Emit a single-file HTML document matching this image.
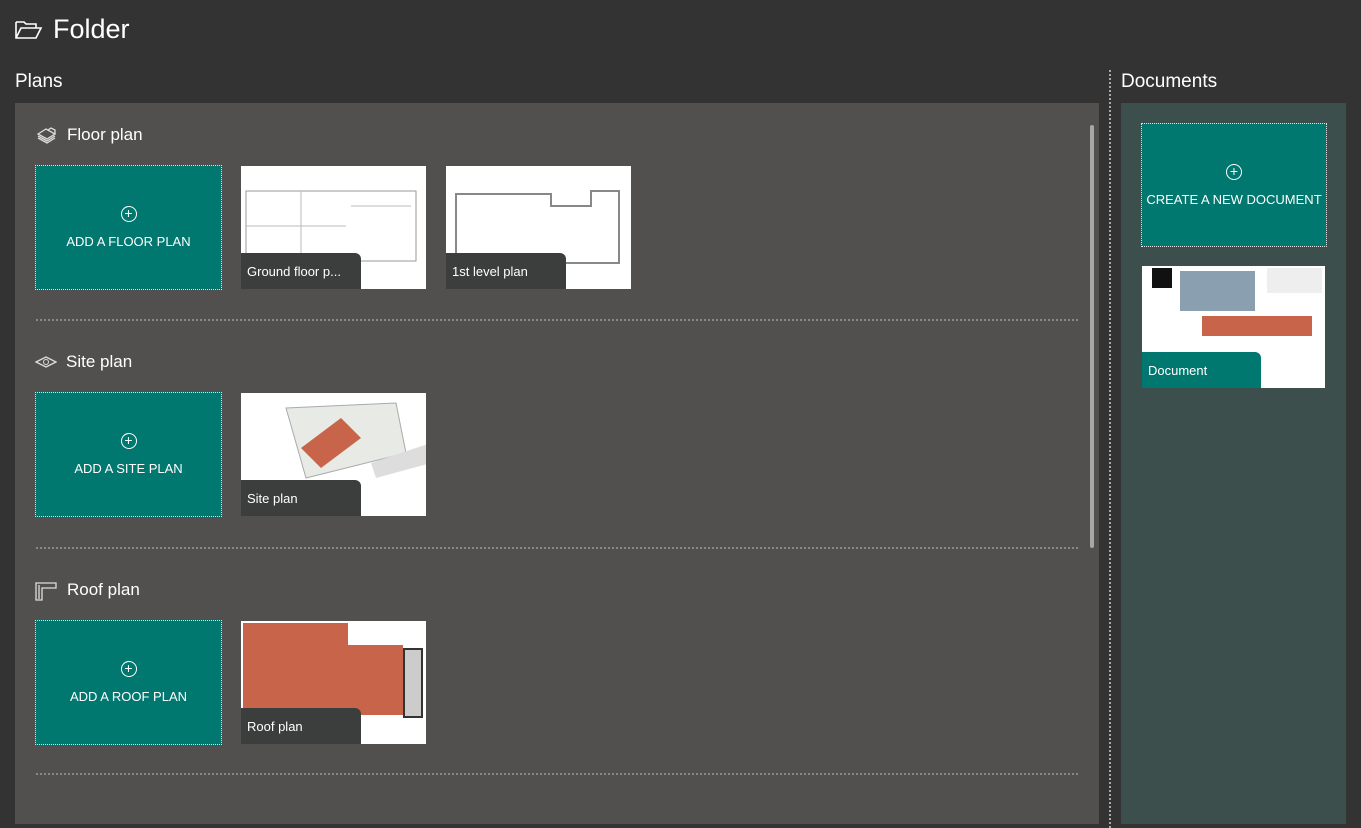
<!DOCTYPE html>
<html><head><style>
*{margin:0;padding:0;box-sizing:border-box}
body{width:1361px;height:828px;background:#333;font-family:"Liberation Sans",sans-serif;color:#fff;position:relative;overflow:hidden}
.a{position:absolute}
.add{position:absolute;width:187px;height:125px;background:#00776f;border:1px dotted #e0e0e0;text-align:center;font-size:13px}
.add .p{position:absolute;left:50%;top:40px;margin-left:-8px;width:16px;height:16px;border:1.5px solid #fff;border-radius:50%;font-size:14px;line-height:12px}
.add .t{position:absolute;left:0;right:0;top:68px}
.th{position:absolute;width:185px;height:123px;background:#fff;overflow:hidden}
.lb{position:absolute;left:0;bottom:0;width:120px;height:36px;background:#3c3d3d;border-radius:0 6px 0 0;font-size:13px;padding:11px 6px}
.sep{position:absolute;left:36px;width:1042px;border-top:2px dotted #8a8886}
.h{position:absolute;font-size:17px;left:67px}
</style></head><body>
<svg class="a" style="left:14px;top:19px" width="30" height="22" viewBox="0 0 30 22"><path d="M2 3h8l2 2h10v4M2 3v16h20l5-10H7L2 19" fill="none" stroke="#fff" stroke-width="1.6"/></svg>
<div class="a" style="left:53px;top:14px;font-size:27px">Folder</div>
<div class="a" style="left:15px;top:71px;font-size:19px">Plans</div>
<div class="a" style="left:1121px;top:71px;font-size:19px">Documents</div>
<div class="a" style="left:1109px;top:70px;height:758px;border-left:2px dotted #aaa"></div>
<div class="a" style="left:15px;top:103px;width:1084px;height:721px;background:#52504e"></div>
<div class="a" style="left:1090px;top:125px;width:4px;height:423px;background:#a9a7a5;border-radius:2px"></div>
<div class="a" style="left:1121px;top:103px;width:225px;height:721px;background:#3d4f4d"></div>

<svg class="a" style="left:36px;top:126px" width="22" height="18" viewBox="0 0 22 18"><path d="M2 8l8-5 9 5-8 5zM2 10l9 5 8-5M2 12l9 5 8-5M12 4l3-2 4 2v4" fill="none" stroke="#ddd" stroke-width="1.3"/></svg>
<div class="h" style="top:125px">Floor plan</div>
<div class="add" style="left:35px;top:165px"><div class="p">+</div><div class="t">ADD A FLOOR PLAN</div></div>
<div class="th" style="left:241px;top:166px"><svg width="185" height="123"><rect x="5" y="25" width="170" height="70" fill="none" stroke="#999"/><path d="M5 60h100M60 25v70M110 40h60" stroke="#bbb"/></svg><div class="lb">Ground floor p...</div></div>
<div class="th" style="left:446px;top:166px"><svg width="185" height="123"><path d="M10 28h95v12h40v-15h28v72H10z" fill="none" stroke="#888" stroke-width="2"/></svg><div class="lb">1st level plan</div></div>
<div class="sep" style="top:319px"></div>

<svg class="a" style="left:35px;top:355px" width="22" height="14" viewBox="0 0 22 14"><path d="M1 7l10-5 10 5-10 5z" fill="none" stroke="#ddd" stroke-width="1.3"/><circle cx="11" cy="7" r="2.5" fill="none" stroke="#ddd"/></svg>
<div class="h" style="top:352px;left:66px">Site plan</div>
<div class="add" style="left:35px;top:392px"><div class="p">+</div><div class="t">ADD A SITE PLAN</div></div>
<div class="th" style="left:241px;top:393px"><svg width="185" height="123"><path d="M45 15l110 -5 10 50-100 25z" fill="#e8eae6" stroke="#aaa"/><path d="M60 55l40-30 20 20-40 30z" fill="#c8644a"/><path d="M130 70l60-20v20l-55 15z" fill="#ddd"/></svg><div class="lb">Site plan</div></div>
<div class="sep" style="top:547px"></div>

<svg class="a" style="left:35px;top:581px" width="22" height="20" viewBox="0 0 22 20"><path d="M1 2h20v5H7v12H1zM4 4v14" fill="none" stroke="#ddd" stroke-width="1.3"/></svg>
<div class="h" style="top:580px">Roof plan</div>
<div class="add" style="left:35px;top:620px"><div class="p">+</div><div class="t">ADD A ROOF PLAN</div></div>
<div class="th" style="left:241px;top:621px"><svg width="185" height="123"><path d="M2 2h105v22h55v70H2z" fill="#c8644a"/><rect x="163" y="28" width="18" height="68" fill="#ccc" stroke="#333" stroke-width="2"/></svg><div class="lb">Roof plan</div></div>
<div class="sep" style="top:773px"></div>

<div class="add" style="left:1141px;top:123px;width:186px;height:124px"><div class="p">+</div><div class="t">CREATE A NEW DOCUMENT</div></div>
<div class="th" style="left:1142px;top:266px;width:183px;height:122px"><svg width="183" height="122"><rect x="10" y="2" width="20" height="20" fill="#111"/><rect x="38" y="5" width="75" height="40" fill="#8aa0b0"/><rect x="60" y="50" width="110" height="20" fill="#c8644a"/><rect x="125" y="2" width="55" height="25" fill="#eee"/></svg><div class="lb" style="background:#00776f;width:119px">Document</div></div>
</body></html>
